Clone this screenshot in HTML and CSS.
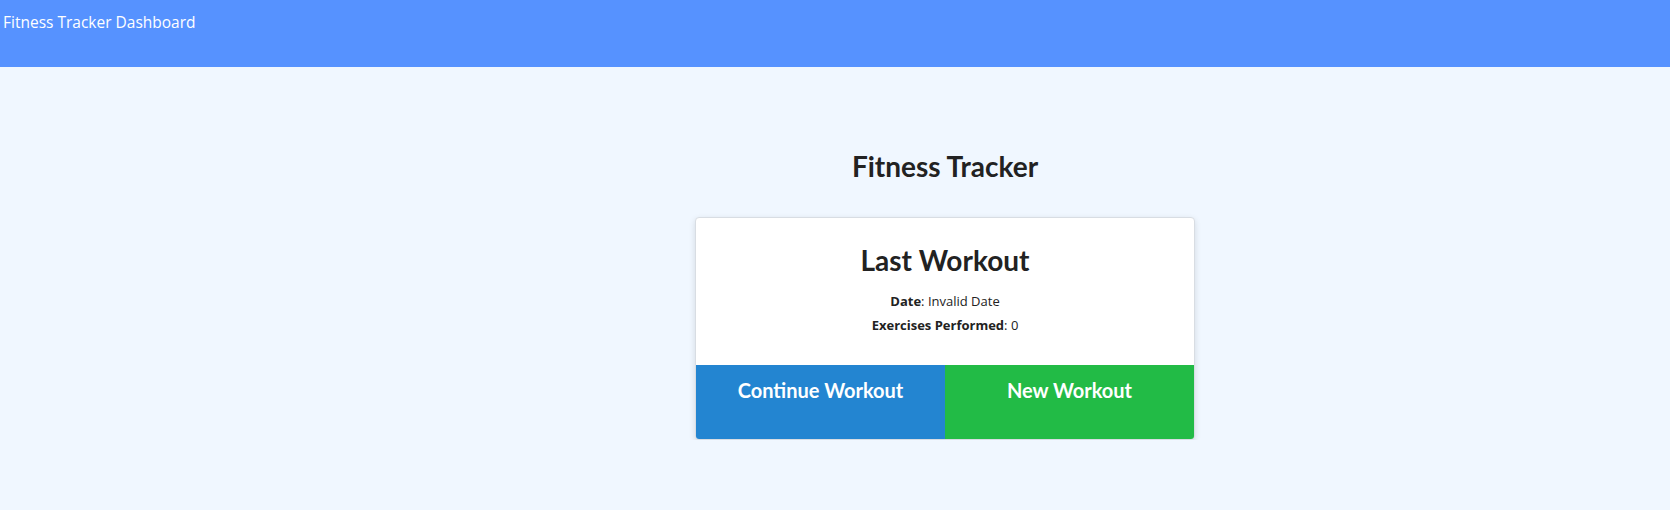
FILE: index.html
```html
<!DOCTYPE html>
<html>
<head>
<meta charset="utf-8">
<link rel="stylesheet" href="styles.css">
</head>
<body>
<header class="topbar">Fitness Tracker Dashboard</header>
<main class="main">
  <h1 class="title">Fitness Tracker</h1>
  <section class="card">
    <div class="card-body">
      <h2 class="card-title">Last Workout</h2>
      <p class="info"><strong>Date</strong>: Invalid Date</p>
      <p class="info"><strong>Exercises Performed</strong>: 0</p>
    </div>
    <div class="actions">
      <a class="btn btn-continue">Continue Workout</a>
      <a class="btn btn-new">New Workout</a>
    </div>
  </section>
</main>
</body>
</html>
```
FILE: styles.css
```css
html, body {
  margin: 0;
  padding: 0;
}
body {
  background: #f0f7ff;
  font-family: "Open Sans", "Noto Sans", sans-serif;
  color: #222;
}
.topbar {
  background: #5692ff;
  color: #fff;
  height: 67px;
  box-sizing: border-box;
  padding: 11px 3px 0;
  font-size: 15.5px;
  line-height: 22px;
}
.main {
  padding-left: 220px;
  display: flex;
  flex-direction: column;
  align-items: center;
}
.title {
  font-family: Lato, sans-serif;
  font-weight: bold;
  font-size: 28px;
  line-height: 34px;
  margin: 82px 0 34px;
  color: #222;
}
.card {
  width: 500px;
  background: #fff;
  border: 1px solid #d8dde3;
  border-radius: 4px;
  box-shadow: 0 2px 6px rgba(0,0,0,0.12);
  overflow: hidden;
  box-sizing: border-box;
}
.card-body {
  padding: 24px 0 28px;
  text-align: center;
}
.card-title {
  font-family: Lato, sans-serif;
  font-weight: bold;
  font-size: 28px;
  line-height: 36px;
  margin: 0 0 11px;
  color: #222;
}
.info {
  margin: 0;
  font-size: 13px;
  line-height: 24px;
  color: #222;
}
.info strong {
  font-weight: bold;
}
.actions {
  display: flex;
  height: 74px;
}
.btn {
  flex: 1;
  color: #fff;
  font-family: Lato, sans-serif;
  font-weight: bold;
  font-size: 20px;
  text-align: center;
  padding-top: 13px;
  box-sizing: border-box;
}
.btn-continue {
  background: #2385d1;
}
.btn-new {
  background: #22bb46;
}
```
